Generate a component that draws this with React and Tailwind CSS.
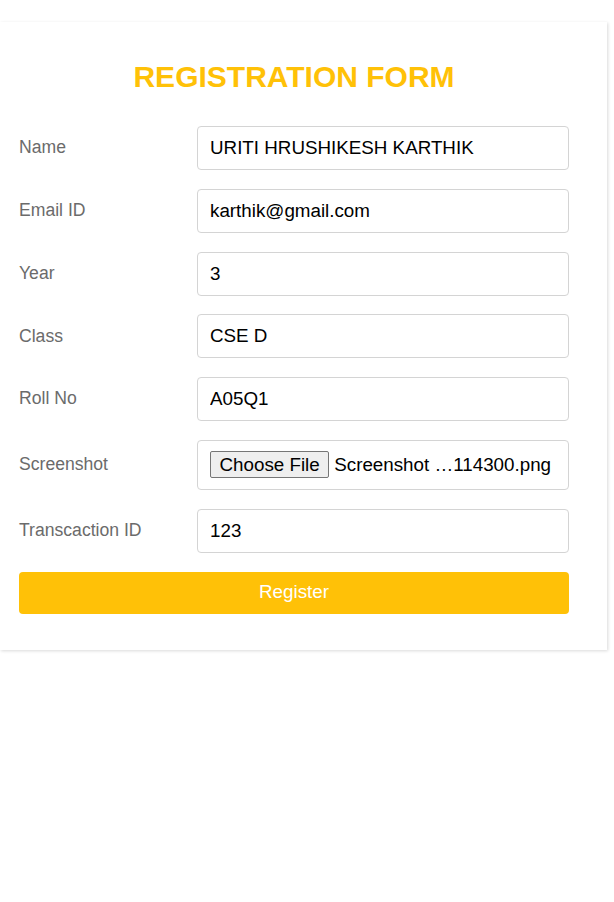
export default function App() {
  const fields = [
    { label: 'Name', value: 'URITI HRUSHIKESH KARTHIK' },
    { label: 'Email ID', value: 'karthik@gmail.com' },
    { label: 'Year', value: '3' },
    { label: 'Class', value: 'CSE D' },
    { label: 'Roll No', value: 'A05Q1' },
  ]

  return (
    <div className="min-h-[902px] bg-white pt-[22px]" style={{ fontFamily: '"Liberation Sans", Arial, sans-serif' }}>
      <div className="w-[607px] bg-white shadow-[1px_1px_3px_rgba(0,0,0,0.15)] pt-[38px] pb-[36px] pl-[19px] pr-[38px]">
        <h1 className="text-center text-[30px] leading-[34px] font-bold text-[#ffc107] mb-[32px]">REGISTRATION FORM</h1>
        <div className="flex flex-col gap-[18.8px]">
          {fields.map((f) => (
            <div key={f.label} className="flex items-center">
              <label className="w-[178px] text-[17.6px] text-[#6b6b6b] -mt-[1px]">{f.label}</label>
              <input
                readOnly
                value={f.value}
                className="flex-1 h-[44px] border border-[#d4d4d4] rounded-[4px] px-3 text-[18.8px] text-black outline-none"
              />
            </div>
          ))}
          <div className="flex items-center">
            <label className="w-[178px] text-[17.6px] text-[#6b6b6b] -mt-[1px]">Screenshot</label>
            <div className="flex-1 h-[50px] border border-[#d4d4d4] rounded-[4px] px-3 flex items-center text-[18.8px] text-black">
              <button className="h-[27px] px-[8.5px] bg-[#efefef] border border-[#767676] rounded-[2px] text-[18.8px] leading-none text-black">
                Choose File
              </button>
              <span className="ml-[5px]">Screenshot …114300.png</span>
            </div>
          </div>
          <div className="flex items-center">
            <label className="w-[178px] text-[17.6px] text-[#6b6b6b] -mt-[1px]">Transcaction ID</label>
            <input
              readOnly
              value="123"
              className="flex-1 h-[44px] border border-[#d4d4d4] rounded-[4px] px-3 text-[18.8px] text-black outline-none"
            />
          </div>
          <button className="w-full h-[42px] bg-[#ffc107] rounded-[4px] text-white text-[18.8px]">Register</button>
        </div>
      </div>
    </div>
  )
}
